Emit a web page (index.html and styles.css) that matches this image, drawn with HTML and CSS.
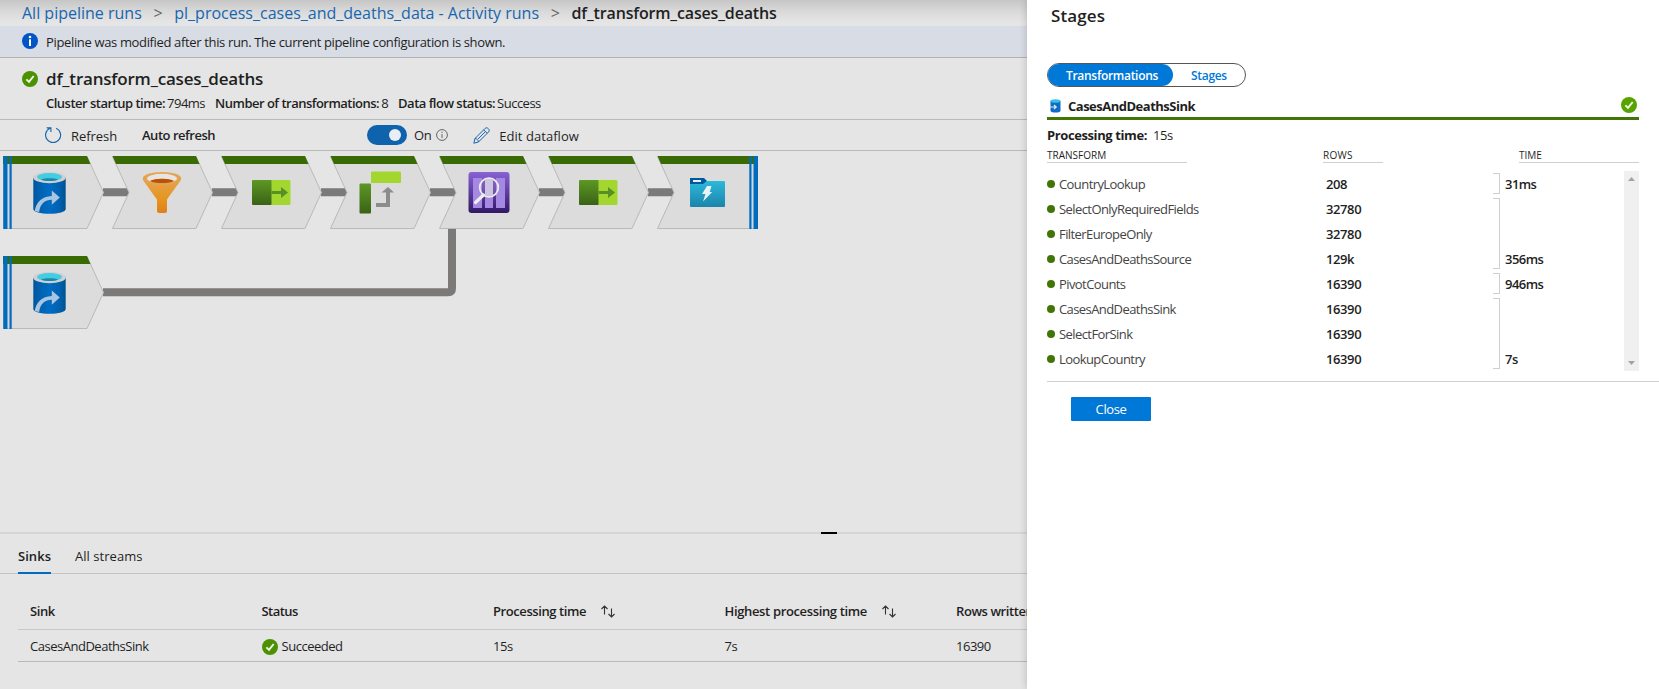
FILE: index.html
```html
<!DOCTYPE html>
<html lang="en">
<head>
<meta charset="utf-8">
<title>Stages</title>
<link rel="stylesheet" href="styles.css">
</head>
<body>
<svg class="defs" width="0" height="0" aria-hidden="true">
  <defs>
    <linearGradient id="gBlue"><stop offset="0" stop-color="#00569c"/><stop offset=".18" stop-color="#0061b0"/><stop offset=".5" stop-color="#006cc2"/><stop offset=".8" stop-color="#0061b0"/><stop offset="1" stop-color="#00528f"/></linearGradient>
    <linearGradient id="gOrange" x2="0" y2="1"><stop offset="0" stop-color="#e5a351"/><stop offset=".6" stop-color="#e5951f"/><stop offset="1" stop-color="#df7f19"/></linearGradient>
    <linearGradient id="gGreen" x2="0" y2="1"><stop offset="0" stop-color="#5d9824"/><stop offset="1" stop-color="#3a6216"/></linearGradient>
    <linearGradient id="gPurple" x2="0" y2="1"><stop offset="0" stop-color="#8a62d4"/><stop offset="1" stop-color="#321867"/></linearGradient>
    <linearGradient id="gTeal" x2="0" y2="1"><stop offset="0" stop-color="#2bb9da"/><stop offset="1" stop-color="#1c84ab"/></linearGradient>
    <symbol id="ok" viewBox="0 0 16 16"><circle cx="8" cy="8" r="8" fill="currentColor"/><path d="M4.4 8.3 7 10.9 11.7 5" fill="none" stroke="#f4f8ef" stroke-width="1.9"/></symbol>
    <symbol id="sort" viewBox="0 0 14 13"><path d="M3.5 9.5V1M.5 4l3-3 3 3M10.5 3.500v8.500M7.500 9l3 3 3-3" fill="none" stroke="#333" stroke-width="1.100"/></symbol>
    <symbol id="source" viewBox="0 0 34 44" overflow="visible">
      <path d="M.5 6v31.500c0 3 7.300 4.800 16.200 4.800s16.200-1.800 16.200-4.800V6z" fill="url(#gBlue)"/>
      <ellipse cx="16.700" cy="6" rx="16.300" ry="5.700" fill="#d0d0d0"/>
      <ellipse cx="16.700" cy="5.500" rx="12.400" ry="3.900" fill="#43cde2"/>
      <path d="M8 7.900c4-1.700 13.500-1.700 17.500 0-4 2-13.500 2-17.500 0z" fill="#198aad"/>
      <path d="M2 39.500C3 31 9 25 19 24.500V19l8 7-8 7.300v-5c-7 0-11.500 4-12.700 12.200z" fill="#a9c5df"/>
    </symbol>
    <symbol id="select" viewBox="0 0 39 25"><rect width="20" height="25" rx="1" fill="url(#gGreen)"/><path d="M19.500 0H37q1.500 0 1.500 1.500v22q0 1.500-1.500 1.500H19.500z" fill="#a3d72f"/><path d="M19.500 11H29V7l7 5.500-7 5.500v-4h-9.500z" fill="#589024"/></symbol>
  </defs>
</svg>
<div class="app">
  <main class="page">
    <nav class="crumbs"><a>All pipeline runs</a><i>&gt;</i><a>pl_process_cases_and_deaths_data - Activity runs</a><i>&gt;</i><b>df_transform_cases_deaths</b></nav>
    <div class="notice">
      <svg width="16" height="16" viewBox="0 0 16 16"><circle cx="8" cy="8" r="8" fill="#0054c6"/><rect x="7" y="6.300" width="2" height="6.700" fill="#fff"/><circle cx="8" cy="4" r="1.300" fill="#fff"/></svg>
      <span>Pipeline was modified after this run. The current pipeline configuration is shown.</span>
    </div>
    <header class="head">
      <div class="title"><svg class="ok" width="16" height="16"><use href="#ok"/></svg><h1>df_transform_cases_deaths</h1></div>
      <div class="meta"><div><b>Cluster startup time:</b><span>794ms</span></div><div><b>Number of transformations:</b><span>8</span></div><div><b>Data flow status:</b><span>Success</span></div></div>
    </header>
    <div class="toolbar">
      <svg width="17" height="18" viewBox="0 0 17 18"><path d="M11.200 2.200A7.500 7.500 0 1 1 5 2.200M1.700 1.800h4.200V6" fill="none" stroke="#1666b0" stroke-width="1.150"/></svg>
      <span class="refresh">Refresh</span>
      <b>Auto refresh</b>
      <div class="switch"><div></div></div>
      <span class="on">On</span>
      <svg class="info" width="12" height="12" viewBox="0 0 12 12"><circle cx="6" cy="6" r="5.400" fill="none" stroke="#666"/><path d="M6 5v4M6 2.800V4" stroke="#666"/></svg>
      <svg class="pencil" width="17" height="17" viewBox="0 0 17 17"><path d="M.8 16.200 2 11.500 12.200 1.300c1.800-1.800 5.300 1.500 3.500 3.500L5.500 15zM10.700 2.800l3.500 3.500M2 11.500c2 .2 3.200 1.500 3.500 3.500M12 5 5 12" fill="none" stroke="#1666b0"/></svg>
      <span class="edit">Edit dataflow</span>
    </div>
    <svg class="flow" width="1027" height="381" viewBox="0 151 1027 381">
      <g fill="none" stroke="#7b7a78" stroke-width="8">
        <path d="M103 192.300h26M212 192.300h26M321 192.300h26M430 192.300h26M539 192.300h26M648 192.300h26"/>
        <path d="M103 292.300H448q4 0 4-4V228"/>
      </g>
      <g fill="#dcdcdc" stroke="#b9b9b9">
        <path d="M3.500 156.500H87L103.500 192.500 87 228.500H3.500z"/>
        <path d="M3.500 256.500H87L103.500 292.500 87 328.500H3.500z"/>
        <path id="node" d="M112.500 156.500H196L212.500 192.500 196 228.500H112.500L129 192.500z"/>
        <use href="#node" x="109"/><use href="#node" x="218"/><use href="#node" x="327"/><use href="#node" x="436"/>
        <path d="M657.500 156.500H757.500V228.500H657.500L674 192.500z"/>
      </g>
      <g fill="#3a6a04">
        <path d="M3 156H87L90.500 164H3zM3 256H87L90.500 264H3z"/>
        <path id="cap" d="M112.500 156H196L199.500 164H116z"/>
        <use href="#cap" x="109"/><use href="#cap" x="218"/><use href="#cap" x="327"/><use href="#cap" x="436"/>
        <path d="M657.500 156H758V164H661z"/>
      </g>
      <path d="M3.300 156h4.200v73H3.300zM9.500 156h2.200v73H9.500zM3.300 256h4.200v73H3.300zM9.500 256h2.200v73H9.500zM749.300 156h2.200v73h-2.200zM753.500 156h4.500v73h-4.500z" fill="#006cbe"/>
      <path d="M8.500 164v64M8.500 264v64M752.500 164v64" stroke="#d2d6da"/>
      <use href="#source" x="32.800" y="171.500" width="34" height="44"/>
      <use href="#source" x="32.800" y="271.500" width="34" height="44"/>
      <path d="M143 178.500c0 3 3 5 14 21V211q0 2 2 2h6q2 0 2-2V199.500c11-16 14-18 14-21z" fill="url(#gOrange)"/>
      <ellipse cx="162" cy="178.500" rx="19.200" ry="6.600" fill="#e5a351"/><ellipse cx="162" cy="178.500" rx="15" ry="4.700" fill="#e7e5e2"/>
      <path d="M150 181c4-3 20-3 24 0-5 3-19 3-24 0z" fill="#bd5204"/>
      <use href="#select" x="252" y="180" width="39" height="25"/>
      <rect x="371" y="171.500" width="30" height="11.500" rx="1" fill="#a3d72f"/><rect x="359.500" y="183.500" width="11.500" height="30" rx="1" fill="url(#gGreen)"/>
      <path d="M376 203h10v-10.500h-4.500L388 187l6 5.500h-4V207h-14z" fill="#8c8c8c"/>
      <rect x="468.500" y="172" width="41" height="41" rx="3" fill="url(#gPurple)"/>
      <path d="M473 178h9v30h-9zM485 178h8v30h-8zM496 178h9v30h-9z" fill="#a488e2"/>
      <path d="M475.500 202.500 483.500 195" stroke="#eee" stroke-width="3.200" stroke-linecap="round"/>
      <circle cx="489" cy="187.500" r="9.300" fill="#cdc4e2" fill-opacity=".15" stroke="#eee" stroke-width="1.800"/>
      <path d="M485 179.500q4-1.500 8 0v16q-4 1.500-8 0z" fill="#cdc4e2"/>
      <use href="#select" x="579" y="180" width="39" height="25"/>
      <path d="M690 178h14l3 3-3 5h-14z" fill="#00599f"/><rect x="693" y="180" width="8" height="2" fill="#eee"/>
      <path d="M690 184h13l4-3h17q1 0 1 1v24q0 1-1 1h-33q-1 0-1-1z" fill="url(#gTeal)"/>
      <path d="M707 186h4.500l-1.800 6h2.500l-9.200 9.500 2.500-7.500H702z" fill="#e8f3f5"/>
    </svg>
    <div class="splitter"><div></div></div>
    <div class="tabs"><b>Sinks</b><span>All streams</span></div>
    <div class="table">
      <div class="row hrow"><b>Sink</b><b class="st">Status</b><b>Processing time<svg width="14" height="13"><use href="#sort"/></svg></b><b class="hp">Highest processing time<svg width="14" height="13"><use href="#sort"/></svg></b><b>Rows written</b></div>
      <div class="row"><span>CasesAndDeathsSink</span><span class="state"><svg class="ok" width="16" height="16"><use href="#ok"/></svg>Succeeded</span><span>15s</span><span>7s</span><span>16390</span></div>
    </div>
  </main>
  <aside class="panel">
    <h2>Stages</h2>
    <div class="body">
      <div class="pill"><b class="active">Transformations</b><b class="other">Stages</b></div>
      <div class="sink">
        <svg width="11" height="14" viewBox="0 0 11 14"><path d="M.5 2v9.500q0 2 5 2t5-2V2z" fill="#0f6cc4"/><ellipse cx="5.500" cy="2" rx="5" ry="1.800" fill="#37bfe6"/><path d="M0 8h6M4 6l2.200 2L4 10" fill="none" stroke="#d9ecfa" stroke-width="1.200"/></svg>
        <b>CasesAndDeathsSink</b>
        <svg class="ok" width="16" height="16"><use href="#ok"/></svg>
      </div>
      <div class="ptime"><b>Processing time:</b><span>15s</span></div>
      <div class="cols"><span>TRANSFORM</span><span class="rows">ROWS</span><span class="time">TIME</span></div>
      <div class="list">
        <ul class="names"><li>CountryLookup</li><li>SelectOnlyRequiredFields</li><li>FilterEuropeOnly</li><li>CasesAndDeathsSource</li><li>PivotCounts</li><li>CasesAndDeathsSink</li><li>SelectForSink</li><li>LookupCountry</li></ul>
        <ul class="counts"><li>208</li><li>32780</li><li>32780</li><li>129k</li><li>16390</li><li>16390</li><li>16390</li><li>16390</li></ul>
        <div class="times"><div class="one">31ms</div><div class="three">356ms</div><div class="one">946ms</div><div class="three">7s</div></div>
        <div class="scroll"><svg width="7" height="4" viewBox="0 0 7 4"><path d="M0 4 3.500 0 7 4z" fill="#a3a3a3"/></svg><svg width="7" height="4" viewBox="0 0 7 4"><path d="M0 0h7L3.500 4z" fill="#a3a3a3"/></svg></div>
      </div>
    </div>
    <footer><button>Close</button></footer>
  </aside>
</div>
</body>
</html>
```
FILE: styles.css
```css
* { box-sizing: border-box; }
body { margin: 0; font: 13px/20px "Open Sans", "Noto Sans", sans-serif; color: #1f1f1f; letter-spacing: -0.48px; }
b, h1, h2 { font-weight: 600; margin: 0; }
svg { flex: none; display: block; }
.defs { position: absolute; }
.app { display: flex; width: 1659px; height: 689px; overflow: hidden; }
.page { width: 1027px; height: 689px; background: #e5e5e5; overflow: hidden; white-space: nowrap; }
.ok { color: #4c9200; }

.crumbs { display: flex; height: 26px; padding-left: 22px; background: linear-gradient(#c6c6c6, #d8d8d8 40%, #e5e5e5 85%); font-size: 16px; line-height: 26px; letter-spacing: 0; }
.crumbs a { color: #1666b0; }
.crumbs i { width: 32.500px; text-align: center; font-style: normal; color: #666; }
.crumbs b { letter-spacing: -0.16px; }
.notice { display: flex; gap: 8px; height: 32px; padding: 7px 0 0 22px; background: #d8dce5; border-bottom: 1px solid #b3b3b3; line-height: 18px; letter-spacing: -0.35px; }
.head { height: 62px; border-bottom: 1px solid #b9b9b9; padding: 10px 0 0 22px; }
.title { display: flex; align-items: center; gap: 8px; height: 22px; }
.title h1 { font-size: 17px; line-height: 22px; letter-spacing: -0.2px; }
.meta { display: flex; gap: 10px; padding: 4px 0 0 24px; line-height: 19px; letter-spacing: -0.51px; }
.meta div { display: flex; gap: 2px; }
.toolbar { display: flex; align-items: center; height: 31px; padding-left: 45px; border-bottom: 1px solid #b9b9b9; }
.toolbar .refresh { width: 71px; padding: 1px 0 0 9px; letter-spacing: -0.05px; }
.toolbar > b { width: 234px; padding-left: 9px; }
.switch { width: 40px; height: 20px; margin: 0 7px 1px 0; padding: 4px; border-radius: 10px; background: #0f62ac; }
.switch div { width: 12px; height: 12px; margin-left: 18px; border-radius: 6px; background: #e8eef4; }
.toolbar .info { margin: 0 25px 1px 5px; }
.toolbar .edit { padding: 1px 0 0 9px; letter-spacing: 0.06px; }
.flow { height: 381px; }
.splitter { height: 2px; background: #d6d6d6; padding-left: 821px; }
.splitter div { width: 16px; height: 2px; background: #000; }
.tabs { display: flex; gap: 24px; height: 40px; padding: 12px 0 0 18px; border-bottom: 1px solid #c4c4c4; letter-spacing: 0.04px; }
.tabs b { width: 33px; height: 28px; border-bottom: 2px solid #006cbe; }
.table { padding: 20px 0 0 18px; }
.row { display: grid; grid-template-columns: repeat(5, 231.500px); width: 1300px; height: 32px; padding-left: 12px; border-bottom: 1px solid #b9b9b9; line-height: 33px; }
.hrow { height: 36px; border-color: #c8c8c8; line-height: 34px; letter-spacing: -0.42px; }
.hrow b { display: flex; align-items: center; gap: 15px; height: 34px; }
.hrow .hp { letter-spacing: -0.35px; }
.hrow .st { letter-spacing: -0.55px; }
.state { display: flex; align-items: center; gap: 4px; }

.panel { position: relative; width: 632px; height: 689px; background: #fff; box-shadow: 0 0 8px rgba(0, 0, 0, .2); }
.panel h2 { height: 63px; padding: 4px 0 0 24px; font-size: 17px; line-height: 24px; letter-spacing: 0.1px; }
.body { height: 319px; margin-left: 20px; border-bottom: 1px solid #cfcfcf; }
.panel .ok { color: #57a300; }
.pill { display: flex; width: 199px; height: 24px; border: 1px solid #555; border-radius: 12px; font-size: 12px; line-height: 24px; letter-spacing: -0.3px; color: #0078d7; }
.pill .active { width: 125px; height: 22px; padding-left: 18px; border-radius: 12px; background: #0078d7; color: #fff; }
.pill .other { padding-left: 18px; }
.sink { display: flex; width: 592px; height: 33px; border-bottom: 3px solid #417505; padding: 10px 2px 0 3px; }
.sink svg { margin-top: 2px; }
.sink b { flex: 1; padding-left: 7px; font-weight: 700; line-height: 18px; letter-spacing: -0.5px; }
.sink .ok { margin-top: 0; }
.ptime { display: flex; gap: 6px; height: 25px; padding-top: 5px; }
.ptime b { font-weight: 700; letter-spacing: -0.4px; }
.cols { display: grid; grid-template-columns: 140px 136px 60px 136px 120px; width: 592px; height: 18px; font-size: 10px; font-weight: 500; letter-spacing: 0; }
.cols span { height: 18px; line-height: 20px; border-bottom: 1px solid #cfcfcf; }
.cols .rows { grid-column: 3; letter-spacing: 0.3px; }
.cols .time { grid-column: 5; }
.list { display: flex; width: 592px; padding-top: 8px; }
.list ul { list-style: none; margin: 0; padding: 0; }
.list li { height: 25px; line-height: 26px; }
.names { width: 279px; color: #444; letter-spacing: -0.58px; }
.names li { display: flex; align-items: center; gap: 4px; }
.names li::before { content: ""; width: 8px; height: 8px; border-radius: 4px; background: #417505; }
.counts { width: 167px; font-weight: 600; letter-spacing: -0.4px; }
.times { width: 131px; padding-top: 2px; font-weight: 600; letter-spacing: -0.55px; display: flex; flex-direction: column; gap: 4px; }
.times div { display: flex; align-items: flex-end; gap: 5px; line-height: 20px; }
.times div::before { content: ""; width: 6px; align-self: stretch; border: 1px solid #cfcfcf; border-left: 0; }
.times .one { height: 21px; }
.times .three { height: 71px; }
.scroll { display: flex; flex-direction: column; justify-content: space-between; align-items: center; width: 15px; height: 200px; padding: 6px 0; background: #f0f0f0; }
footer { padding: 15px 0 0 44px; }
button { display: block; width: 80px; height: 24px; padding: 0; border: 0; border-radius: 1px; background: #0078d7; color: #fff; font: inherit; line-height: 24px; letter-spacing: -0.4px; }
```
